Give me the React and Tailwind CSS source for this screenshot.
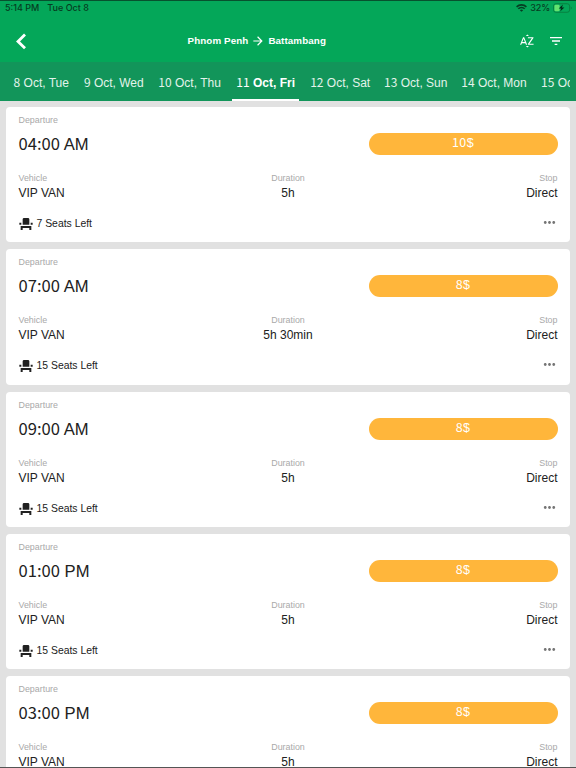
import React, { useState } from 'react';
import { MdArrowForward, MdEventSeat, MdFilterList, MdMoreHoriz, MdSortByAlpha } from 'react-icons/md';

const dates = [
  { day: '8', label: 'Oct, Tue', width: 'w-[62.5px]' },
  { day: '9', label: 'Oct, Wed', width: 'w-[67px]' },
  { day: '10', label: 'Oct, Thu', width: 'w-[69px]' },
  { day: '11', label: 'Oct, Fri', width: 'w-[67.5px]' },
  { day: '12', label: 'Oct, Sat', width: 'w-[66px]' },
  { day: '13', label: 'Oct, Sun', width: 'w-[69.5px]' },
  { day: '14', label: 'Oct, Mon', width: 'w-[71.5px]' },
  { day: '15', label: 'Oct, Tue', width: 'w-[69px]' },
];

const trips = [
  { time: '04:00', period: 'AM', price: 10, duration: '5h', seats: 7 },
  { time: '07:00', period: 'AM', price: 8, duration: '5h 30min', seats: 15 },
  { time: '09:00', period: 'AM', price: 8, duration: '5h', seats: 15 },
  { time: '01:00', period: 'PM', price: 8, duration: '5h', seats: 15 },
  { time: '03:00', period: 'PM', price: 8, duration: '5h', seats: 15 },
];

const Num = ({ children }) => (
  <span className="leading-none font-normal font-['Noto_Sans_CJK_JP',sans-serif]">{children}</span>
);

const StatusBar = () => (
  <div className="flex h-[14px] items-center justify-between pl-[5px] pr-[4px] text-[9px] leading-[14px] text-[#063d22] font-['Inter','Liberation_Sans',sans-serif] font-medium">
    <div className="flex gap-[8px]">
      <span>5:14 PM</span>
      <span>Tue Oct 8</span>
    </div>
    <div className="flex items-center gap-[3px]">
      <svg width="11" height="8" viewBox="0 0 11 8" fill="none" stroke="#063d22" strokeWidth="1.6">
        <path d="M.6 2.9a7 7 0 0 1 9.8 0M2.3 4.8a4.5 4.5 0 0 1 6.4 0" />
        <path d="M5.5 7.8 3.9 6.2a2.3 2.3 0 0 1 3.2 0z" fill="#063d22" stroke="none" />
      </svg>
      <span className="tracking-[-0.1px]">32%</span>
      <svg width="19" height="10" viewBox="0 0 20 10">
        <rect x=".5" y=".5" width="17" height="9" rx="2.5" fill="none" stroke="#07803f" />
        <rect x="1.5" y="1.5" width="5.5" height="7" rx="1.5" fill="#63e36f" />
        <path d="M10.5 1.3 6 5.6h2.7L7.5 8.8 12 4.4H9.4z" fill="#032d18" />
        <path d="M18.8 3.6v2.8q1-.4 1-1.4t-1-1.4" fill="#07803f" />
      </svg>
    </div>
  </div>
);

const TripCard = ({ trip }) => (
  <div className="h-[135.3px] shrink-0 rounded-[4px] bg-white pl-[12.5px] pr-[12.5px] pt-[7px] text-[#212121]">
    <p className="text-[8.9px] leading-[12px] text-[#a9a9a9]">Departure</p>
    <div className="mt-[6px] flex h-[24px] items-center justify-between">
      <p className="h-[24px] text-[16.6px] leading-[26px]">
        <Num>{trip.time}</Num> {trip.period}
      </p>
      <button className="h-[22px] w-[189px] rounded-full bg-[#ffb63b] pb-[2px] text-[12.5px] leading-[20px] tracking-[0.4px] text-white">
        <Num>{trip.price}</Num>$
      </button>
    </div>
    <div className="mt-[15px] grid grid-cols-3 text-[12px] leading-[16px]">
      <div>
        <p className="text-[8.9px] leading-[14px] text-[#a9a9a9]">Vehicle</p>
        <p>VIP VAN</p>
      </div>
      <div className="text-center">
        <p className="text-[8.9px] leading-[14px] text-[#a9a9a9]">Duration</p>
        <p>{trip.duration}</p>
      </div>
      <div className="text-right">
        <p className="text-[8.9px] leading-[14px] text-[#a9a9a9]">Stop</p>
        <p>Direct</p>
      </div>
    </div>
    <div className="mt-[15px] flex h-[16px] items-center">
      <MdEventSeat size={16} className="-ml-px" />
      <span className="ml-[3px] text-[10.4px] leading-[16px]">{trip.seats} Seats Left</span>
      <MdMoreHoriz size={17} className="mb-[3px] ml-auto text-[#757575]" />
    </div>
  </div>
);

const App = () => {
  const [selected, setSelected] = useState('11');

  return (
    <div className="flex h-[768px] w-[576px] flex-col overflow-hidden border-y border-t-[#07512e] border-b-[#555555] bg-[#e1e1e1] font-['Liberation_Sans',Arial,sans-serif]">
      <header className="h-[61px] shrink-0 bg-[#04a759] text-white">
        <StatusBar />
        <div className="flex h-[46px] items-center px-[12px] pt-[5px]">
          <svg width="18" height="18" viewBox="0 0 18 18" fill="none" stroke="currentColor" strokeWidth="2.8">
            <path d="M13 2.5 6 9.4l7 6.9" />
          </svg>
          <h1 className="ml-[157.5px] flex items-center gap-[3px] text-[9.8px] font-bold leading-[14px] tracking-[0.1px]">
            Phnom Penh
            <MdArrowForward size={14} />
            Battambang
          </h1>
          <div className="ml-auto flex items-center gap-[13px]">
            <MdSortByAlpha size={16} />
            <MdFilterList size={16} />
          </div>
        </div>
      </header>

      <nav className="flex h-[39px] shrink-0 bg-[#12955a] px-[6px]">
        <div className="flex gap-[7.8px] overflow-hidden pl-[4px]">
          {dates.map(({ day, label, width }) => (
            <button
              key={day}
              onClick={() => setSelected(day)}
              className={`${width} h-[39px] shrink-0 whitespace-nowrap border-b-[2px] pt-[4px] text-[12px] leading-[35px] ${
                day === selected ? 'border-white font-bold text-white' : 'border-transparent text-[#e3f3eb]'
              }`}
            >
              <Num>{day}</Num> {label}
            </button>
          ))}
        </div>
      </nav>

      <main className="flex min-h-0 flex-1 flex-col gap-[7px] overflow-hidden px-[6px] pt-[6px]">
        {trips.map((trip) => (
          <TripCard key={trip.time} trip={trip} />
        ))}
      </main>
    </div>
  );
};

export default App;
